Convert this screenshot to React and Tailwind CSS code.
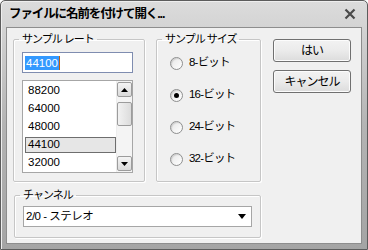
import React from "react";

const jp = { fontFamily: '"Liberation Sans", "Noto Sans CJK JP", sans-serif' };

const rates = ["88200", "64000", "48000", "44100", "32000"];
const sizes = ["8-ビット", "16-ビット", "24-ビット", "32-ビット"];

const Group = ({ title, className, bodyClass, children }) => (
  <fieldset className={`border border-[#c6c6c6] rounded-[2px] shadow-[inset_1px_1px_0_#fff,1px_1px_0_#fff] ${className}`}>
    <legend className="ml-[5px] px-[3px] text-[11px] leading-[14px] tracking-[-1px] text-black">{title}</legend>
    <div className={bodyClass}>{children}</div>
  </fieldset>
);

const Radio = ({ label, checked }) => (
  <div className="flex items-center h-[32px]">
    <span className="w-[13px] h-[13px] rounded-full border border-[#8e8f8f] bg-gradient-to-br from-[#e6e6e6] to-white flex items-center justify-center shadow-[inset_1px_1px_1px_rgba(0,0,0,0.12)]">
      {checked && <span className="w-[5px] h-[5px] rounded-full bg-black" />}
    </span>
    <span className="ml-[6px] text-[11.5px] tracking-[-0.8px] text-black">{label}</span>
  </div>
);

const Button = ({ children }) => (
  <button className="w-[78px] h-[23px] rounded-[3px] border border-[#707070] bg-gradient-to-b from-[#f2f2f2] via-[#ebebeb] to-[#dcdcdc] shadow-[inset_0_0_0_1px_#fcfcfc] text-[12px] tracking-[-1px] text-black">
    {children}
  </button>
);

const ScrollBtn = ({ up }) => (
  <div className="w-[15px] h-[15px] border border-[#9c9c9c] rounded-[2px] bg-gradient-to-b from-[#f4f4f4] to-[#dadada] flex items-center justify-center">
    <svg width="7" height="4" viewBox="0 0 7 4">
      <path d={up ? "M0 4 L3.5 0 L7 4 Z" : "M0 0 L3.5 4 L7 0 Z"} fill="#000" />
    </svg>
  </div>
);

export default function App() {
  return (
    <div style={jp} className="w-[368px] h-[250px] bg-gradient-to-b from-[#dcdcdc] via-[#b4b4b4] to-[#a4a4a4] border border-[#5c5c5c] rounded-t-[5px] flex flex-col px-[5px] pb-[5px] shadow-[inset_1px_1px_0_#eee]">
      {/* Title bar */}
      <div className="h-[26px] flex items-center justify-between pl-[3px] pr-[6px]">
        <span className="text-[12.5px] font-bold tracking-[-1.1px] text-black">ファイルに名前を付けて開く...</span>
        <svg width="12" height="12" viewBox="0 0 12 12">
          <path d="M1.5 1.5 L10.5 10.5 M10.5 1.5 L1.5 10.5" stroke="#4a4a4a" strokeWidth="2.2" />
        </svg>
      </div>

      {/* Body */}
      <div className="flex-1 bg-[#f0f0f0] border border-[#8d8d8d]">
        <div className="flex pl-[6px] pt-[4px]">
          {/* Sample rate */}
          <Group title="サンプル レート" className="w-[132px] h-[150px]" bodyClass="px-[8px]">
            <div className="mt-[6px] w-[111px] h-[21px] border border-[#7f8db0] bg-white flex items-center pl-[2px]">
              <span className="bg-[#3399ff] text-white text-[11.5px] leading-[14px] px-[1px]">44100</span>
              <span className="w-[1px] h-[14px] bg-[#c06010]" />
            </div>
            <div className="mt-[7px] w-[111px] h-[93px] border border-[#a6a6a6] bg-white flex overflow-hidden">
              <div className="flex-1 pt-[1px] pl-[2px]">
                {rates.map((r) => (
                  <div key={r} className="h-[18px] flex items-center">
                    <span
                      className={`w-[91px] h-[16px] flex items-center pl-[2px] text-[11.5px] text-black ${
                        r === "44100" ? "bg-[#e6e6e6] border border-[#6e6e6e]" : "border border-transparent"
                      }`}
                    >
                      {r}
                    </span>
                  </div>
                ))}
              </div>
              <div className="w-[17px] bg-[#f4f4f4] flex flex-col items-center py-[1px] border-l border-[#ededed]">
                <ScrollBtn up />
                <div className="mt-[5px] w-[15px] h-[24px] border border-[#9c9c9c] rounded-[2px] bg-gradient-to-r from-[#f2f2f2] to-[#dcdcdc]" />
                <div className="flex-1" />
                <ScrollBtn />
              </div>
            </div>
          </Group>

          {/* Sample size */}
          <Group title="サンプル サイズ" className="ml-[11px] w-[105px] h-[150px]" bodyClass="pl-[13px] mt-[1px]">
            {sizes.map((s) => (
              <Radio key={s} label={s} checked={s === "16-ビット"} />
            ))}
          </Group>

          {/* Buttons */}
          <div className="ml-[12px] mt-[7px] flex flex-col gap-[8px]">
            <Button>はい</Button>
            <Button>キャンセル</Button>
          </div>
        </div>

        {/* Channel */}
        <div className="pl-[7px] mt-[6px]">
          <Group title="チャンネル" className="w-[247px] h-[50px]" bodyClass="px-[8px]">
            <div className="mt-[4px] w-[229px] h-[21px] border border-[#a6a6a6] bg-white flex items-center justify-between pl-[2px] pr-[5px]">
              <span className="text-[11.5px] tracking-[-0.5px] text-black">2/0 - ステレオ</span>
              <svg width="8" height="5" viewBox="0 0 8 5">
                <path d="M0 0 L4 5 L8 0 Z" fill="#000" />
              </svg>
            </div>
          </Group>
        </div>
      </div>
    </div>
  );
}
